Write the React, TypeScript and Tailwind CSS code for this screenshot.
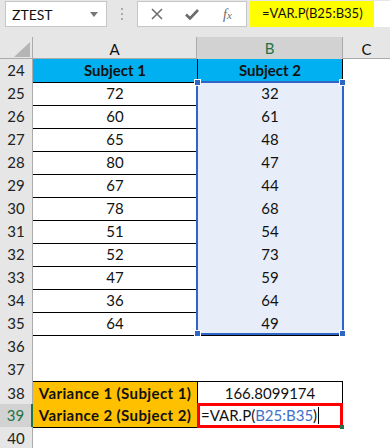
import React from "react";

const rowsData: [number, number][] = [
  [72, 32],
  [60, 61],
  [65, 48],
  [80, 47],
  [67, 44],
  [78, 68],
  [51, 54],
  [52, 73],
  [47, 59],
  [36, 64],
  [64, 49],
];

const grid = "grid grid-cols-[33px_164px_146px_47px]";

function RowHead({ n, active }: { n: number; active?: boolean }) {
  return (
    <div
      className={
        active
          ? "h-full flex items-center justify-center bg-[#d2d2d2] text-[#217346] border-r-2 border-r-[#217346] border-b border-b-[#c6c6c6]"
          : "h-full flex items-center justify-center bg-[#e6e6e6] text-[#222] border-r border-r-[#ababab] border-b border-b-[#d4d4d4]"
      }
    >
      {n}
    </div>
  );
}

function Handle({ className }: { className: string }) {
  return <div className={"absolute w-[7px] h-[7px] bg-[#2f66c6] border border-white " + className} />;
}

export default function App() {
  return (
    <div className="w-[390px] h-[448px] overflow-hidden bg-white text-[15px] text-[#111]" style={{ fontFamily: "Lato, 'Open Sans', sans-serif" }}>
      {/* formula bar */}
      <div className="h-[37px] bg-[#e6e6e6] flex items-start pt-[1px]">
        <div className="ml-[5px] w-[102px] h-[26px] bg-white border border-[#c6c6c6] flex items-center justify-between pl-[6px] pr-[8px] text-[14px]">
          <span>ZTEST</span>
          <svg width="8" height="5" viewBox="0 0 8 5">
            <path d="M0 0h8L4 5z" fill="#777" />
          </svg>
        </div>
        <div className="w-[30px] h-[26px] flex flex-col items-center justify-center gap-[3px]">
          <span className="w-[2px] h-[2px] bg-[#aaa]" />
          <span className="w-[2px] h-[2px] bg-[#aaa]" />
          <span className="w-[2px] h-[2px] bg-[#aaa]" />
        </div>
        <div className="w-[110px] h-[26px] bg-white border border-[#c6c6c6] flex items-center">
          <svg className="ml-[13px]" width="12" height="12" viewBox="0 0 12 12">
            <path d="M1 1L11 11M11 1L1 11" stroke="#6b6b6b" strokeWidth="1.5" />
          </svg>
          <svg className="ml-[22px]" width="14" height="11" viewBox="0 0 14 11">
            <path d="M1 5.5l4 4 8-8.5" stroke="#6b6b6b" strokeWidth="2.6" fill="none" />
          </svg>
          <span className="ml-[24px] italic text-[#6b6b6b] text-[14px]" style={{ fontFamily: "'Liberation Serif', serif" }}>
            f<span className="text-[11px]">x</span>
          </span>
        </div>
        <div className="ml-[3px] flex-1 h-[26px] bg-white flex">
          <div className="w-[124px] h-full bg-[#ffff00] flex items-center pl-[12px] text-[13px]">=VAR.P(B25:B35)</div>
        </div>
      </div>

      {/* column headers */}
      <div className={grid + " h-[22px] bg-[#e6e6e6] border-b border-[#ababab]"}>
        <div className="relative border-r border-[#ababab]">
          <svg className="absolute left-[14px] top-[5px]" width="16" height="15" viewBox="0 0 16 15">
            <path d="M16 0V15H0z" fill="#b5b5b5" />
          </svg>
        </div>
        <div className="flex items-center justify-center border-r border-[#ababab]">A</div>
        <div className="flex items-center justify-center bg-[#d2d2d2] text-[#217346] border-r border-[#ababab] border-b-2 border-b-[#217346] -mb-[1px]">B</div>
        <div className="flex items-center justify-center">C</div>
      </div>

      {/* sheet body */}
      <div className="relative">
        <div className={grid + " h-[23px]"}>
          <RowHead n={24} />
          <div className="bg-[#00b0f0] font-bold flex items-center justify-center border-b border-black">Subject 1</div>
          <div className="bg-[#00b0f0] font-bold flex items-center justify-center border-b border-r border-l border-black">Subject 2</div>
          <div />
        </div>
        {rowsData.map(([a, b], i) => (
          <div key={i} className={grid + " h-[23px]"}>
            <RowHead n={25 + i} />
            <div className="flex items-center justify-center border-b border-black">{a}</div>
            <div className="bg-[#e8eef9] flex items-center justify-center border-b border-black">{b}</div>
            <div />
          </div>
        ))}
        <div className={grid + " h-[23px]"}>
          <RowHead n={36} />
        </div>
        <div className={grid + " h-[23px]"}>
          <RowHead n={37} />
        </div>
        <div className={grid + " h-[23px]"}>
          <RowHead n={38} />
          <div className="bg-[#ffc000] font-bold tracking-[0.4px] flex items-center justify-center border-t border-b border-black">Variance 1 (Subject 1)</div>
          <div className="flex items-center justify-center border border-black">166.8099174</div>
          <div />
        </div>
        <div className={grid + " h-[23px]"}>
          <RowHead n={39} active />
          <div className="bg-[#ffc000] font-bold tracking-[0.4px] flex items-center justify-center border-b border-black">Variance 2 (Subject 2)</div>
          <div className="relative flex items-center pl-[1px] border-[3px] border-[#ff0000] -mt-[1px] h-[25px]">
            <span>=VAR.P(</span>
            <span className="text-[#3f6fc9]">B25:B35</span>
            <span>)</span>
            <span className="ml-[1px] w-[1px] h-[17px] bg-black" />
            <span className="absolute -right-[4px] -bottom-[4px] w-[4px] h-[4px] bg-[#217346]" />
          </div>
          <div />
        </div>
        <div className={grid + " h-[23px]"}>
          <RowHead n={40} />
        </div>

        {/* selection overlay B25:B35 */}
        <div className="absolute left-[196px] top-[22px] w-[148px] h-[254px] border-2 border-[#2f66c6] pointer-events-none">
          <Handle className="-left-[4px] -top-[4px]" />
          <Handle className="-right-[4px] -top-[4px]" />
          <Handle className="-left-[4px] -bottom-[4px]" />
          <Handle className="-right-[4px] -bottom-[4px]" />
        </div>
      </div>
    </div>
  );
}
